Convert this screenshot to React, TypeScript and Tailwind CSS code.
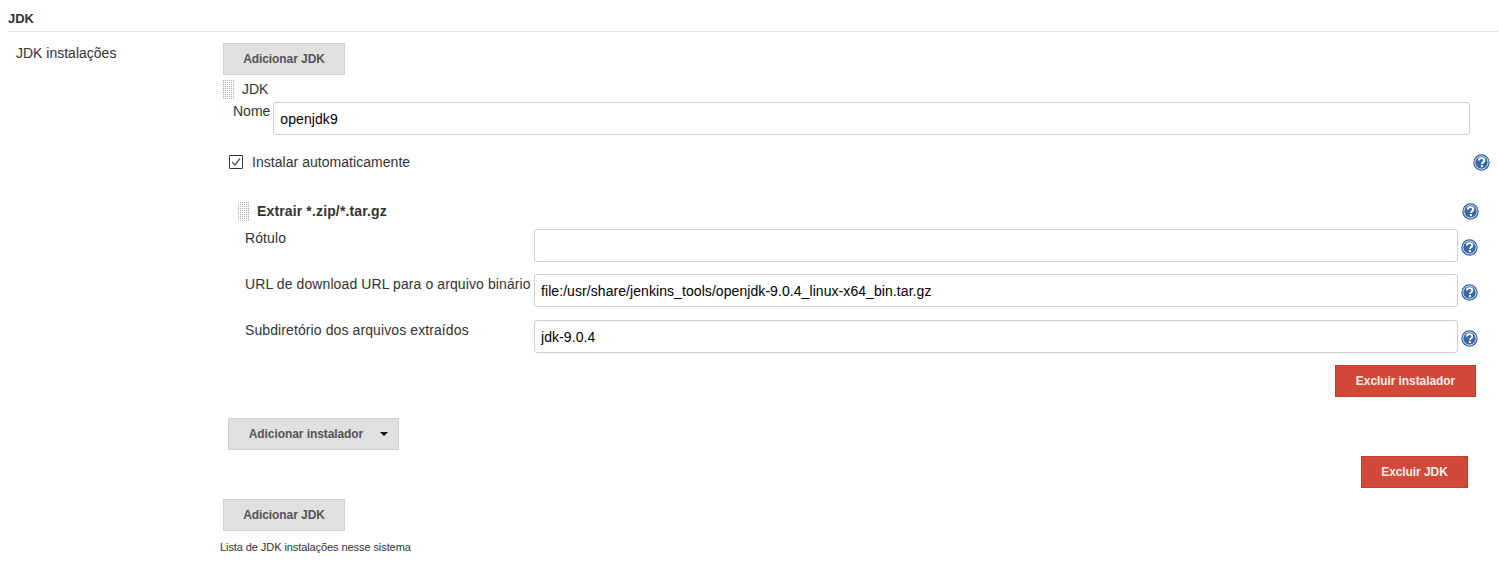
const font = "font-['Liberation_Sans',Arial,sans-serif]"

function Grip({ className = '' }: { className?: string }) {
  return (
    <svg width="11" height="19" viewBox="0 0 11 19" className={className}>
      <defs>
        <pattern id="grip" width="2" height="2" patternUnits="userSpaceOnUse">
          <rect width="1" height="1" fill="#a8a8a8" />
        </pattern>
      </defs>
      <rect width="11" height="19" fill="url(#grip)" />
    </svg>
  )
}

function Help() {
  return (
    <svg width="17" height="17" viewBox="0 0 17 17" className="shrink-0">
      <circle cx="8.5" cy="8.5" r="8.2" fill="#2c5c9a" />
      <circle cx="8.5" cy="8.5" r="6.6" fill="#3a68a4" stroke="#dfe8f2" strokeWidth="1" />
      <path d="M5.8 6.600c0-1.500 1.200-2.500 2.800-2.500s2.700.9 2.700 2.300c0 1.900-2.300 1.900-2.300 3.500" fill="none" stroke="#fff" strokeWidth="1.900" />
      <rect x="7.900" y="11" width="2" height="2.100" fill="#fff" />
    </svg>
  )
}

function GrayButton({ children, className = '' }: { children: React.ReactNode; className?: string }) {
  return (
    <button className={`h-[32px] bg-[#e0e0e0] border border-[#d0d0d0] text-[12px] tracking-[-0.08px] font-bold text-[#555555] ${className}`}>
      {children}
    </button>
  )
}

function RedButton({ children, className = '' }: { children: React.ReactNode; className?: string }) {
  return (
    <button className={`h-[32px] bg-[#d24939] border border-[#bd3e30] text-[12px] tracking-[-0.08px] font-bold text-[#fbeeee] ${className}`}>
      {children}
    </button>
  )
}

function TextBox({ value, className = '' }: { value: string; className?: string }) {
  return (
    <input
      readOnly
      value={value}
      className={`h-[33px] border border-[#cccccc] rounded-[3px] px-[6px] text-[14px] tracking-[0.07px] text-black bg-white outline-none ${className}`}
    />
  )
}

function Row({ label, value, labelClass = 'pt-[1px]', className = '' }: { label: string; value: string; labelClass?: string; className?: string }) {
  return (
    <div className={`flex items-start ${className}`}>
      <div className={`w-[300px] shrink-0 pl-[11px] text-[14px] tracking-[0.1px] leading-[18px] text-[#333333] whitespace-nowrap ${labelClass}`}>{label}</div>
      <TextBox value={value} className="w-[924px]" />
      <div className="ml-[3px] mt-[10px]"><Help /></div>
    </div>
  )
}

export default function App() {
  return (
    <div className={`relative w-[1499px] h-[561px] overflow-hidden bg-white ${font}`}>
      {/* titulo da secao */}
      <div className="ml-[8px] mr-[1px] h-[32px] border-b border-[#e0e0e0] pt-[11px] text-[13px] leading-[16px] font-bold text-[#333333]">JDK</div>

      <div className="flex">
        <div className="w-[223px] shrink-0 pl-[16px] pt-[12px] text-[14px] leading-[18px] text-[#333333]">JDK instalações</div>

        <div className="flex-1 pt-[11px]">
          <GrayButton className="w-[122px]">Adicionar JDK</GrayButton>

          <div className="flex items-center mt-[4px] h-[20px]">
            <Grip />
            <span className="ml-[8px] text-[14px] text-[#333333]">JDK</span>
          </div>

          <div className="flex items-start mt-[3px] pl-[10px]">
            <span className="mr-[3px] text-[14px] leading-[18px] text-[#333333]">Nome</span>
            <TextBox value="openjdk9" className="w-[1197px]" />
          </div>

          <div className="flex items-center mt-[17px] pl-[6px] h-[20px]">
            <span className="w-[14px] h-[14px] border border-[#333333] rounded-[1px] flex items-center justify-center">
              <svg width="10" height="10" viewBox="0 0 10 10"><path d="M1 5l3 3 5-6.500" fill="none" stroke="#555555" strokeWidth="1.300" /></svg>
            </span>
            <span className="ml-[9px] text-[14px] tracking-[0.04px] text-[#333333]">Instalar automaticamente</span>
            <div className="ml-auto mr-[9px]"><Help /></div>
          </div>

          <div className="flex items-center mt-[29px] pl-[15px] h-[20px]">
            <Grip />
            <span className="ml-[8px] text-[14px] tracking-[0.14px] font-bold text-[#333333]">Extrair *.zip/*.tar.gz</span>
            <div className="ml-auto mr-[20px] mt-[1px]"><Help /></div>
          </div>

          <Row label="Rótulo" value="" labelClass="" className="mt-[8px] pl-[11px]" />
          <Row label="URL de download URL para o arquivo binário" value="file:/usr/share/jenkins_tools/openjdk-9.0.4_linux-x64_bin.tar.gz" className="mt-[12px] pl-[11px]" />
          <Row label="Subdiretório dos arquivos extraídos" value="jdk-9.0.4" className="mt-[13px] pl-[11px]" />

          <div className="flex justify-end mt-[12px] pr-[23px]">
            <RedButton className="w-[141px]">Excluir instalador</RedButton>
          </div>

          <div className="mt-[21px] pl-[5px]">
            <GrayButton className="w-[171px] relative pr-[15px]">
              Adicionar instalador
              <span className="absolute right-[10px] top-[13px] border-x-[4px] border-x-transparent border-t-[4px] border-t-black" />
            </GrayButton>
          </div>

          <div className="flex justify-end mt-[6px] pr-[31px]">
            <RedButton className="w-[107px]">Excluir JDK</RedButton>
          </div>

          <GrayButton className="w-[122px] block mt-[11px]">Adicionar JDK</GrayButton>

          <div className="mt-[9px] -ml-[3px] text-[11px] tracking-[-0.08px] leading-[14px] text-[#333333]">Lista de JDK instalações nesse sistema</div>
        </div>
      </div>
    </div>
  )
}
